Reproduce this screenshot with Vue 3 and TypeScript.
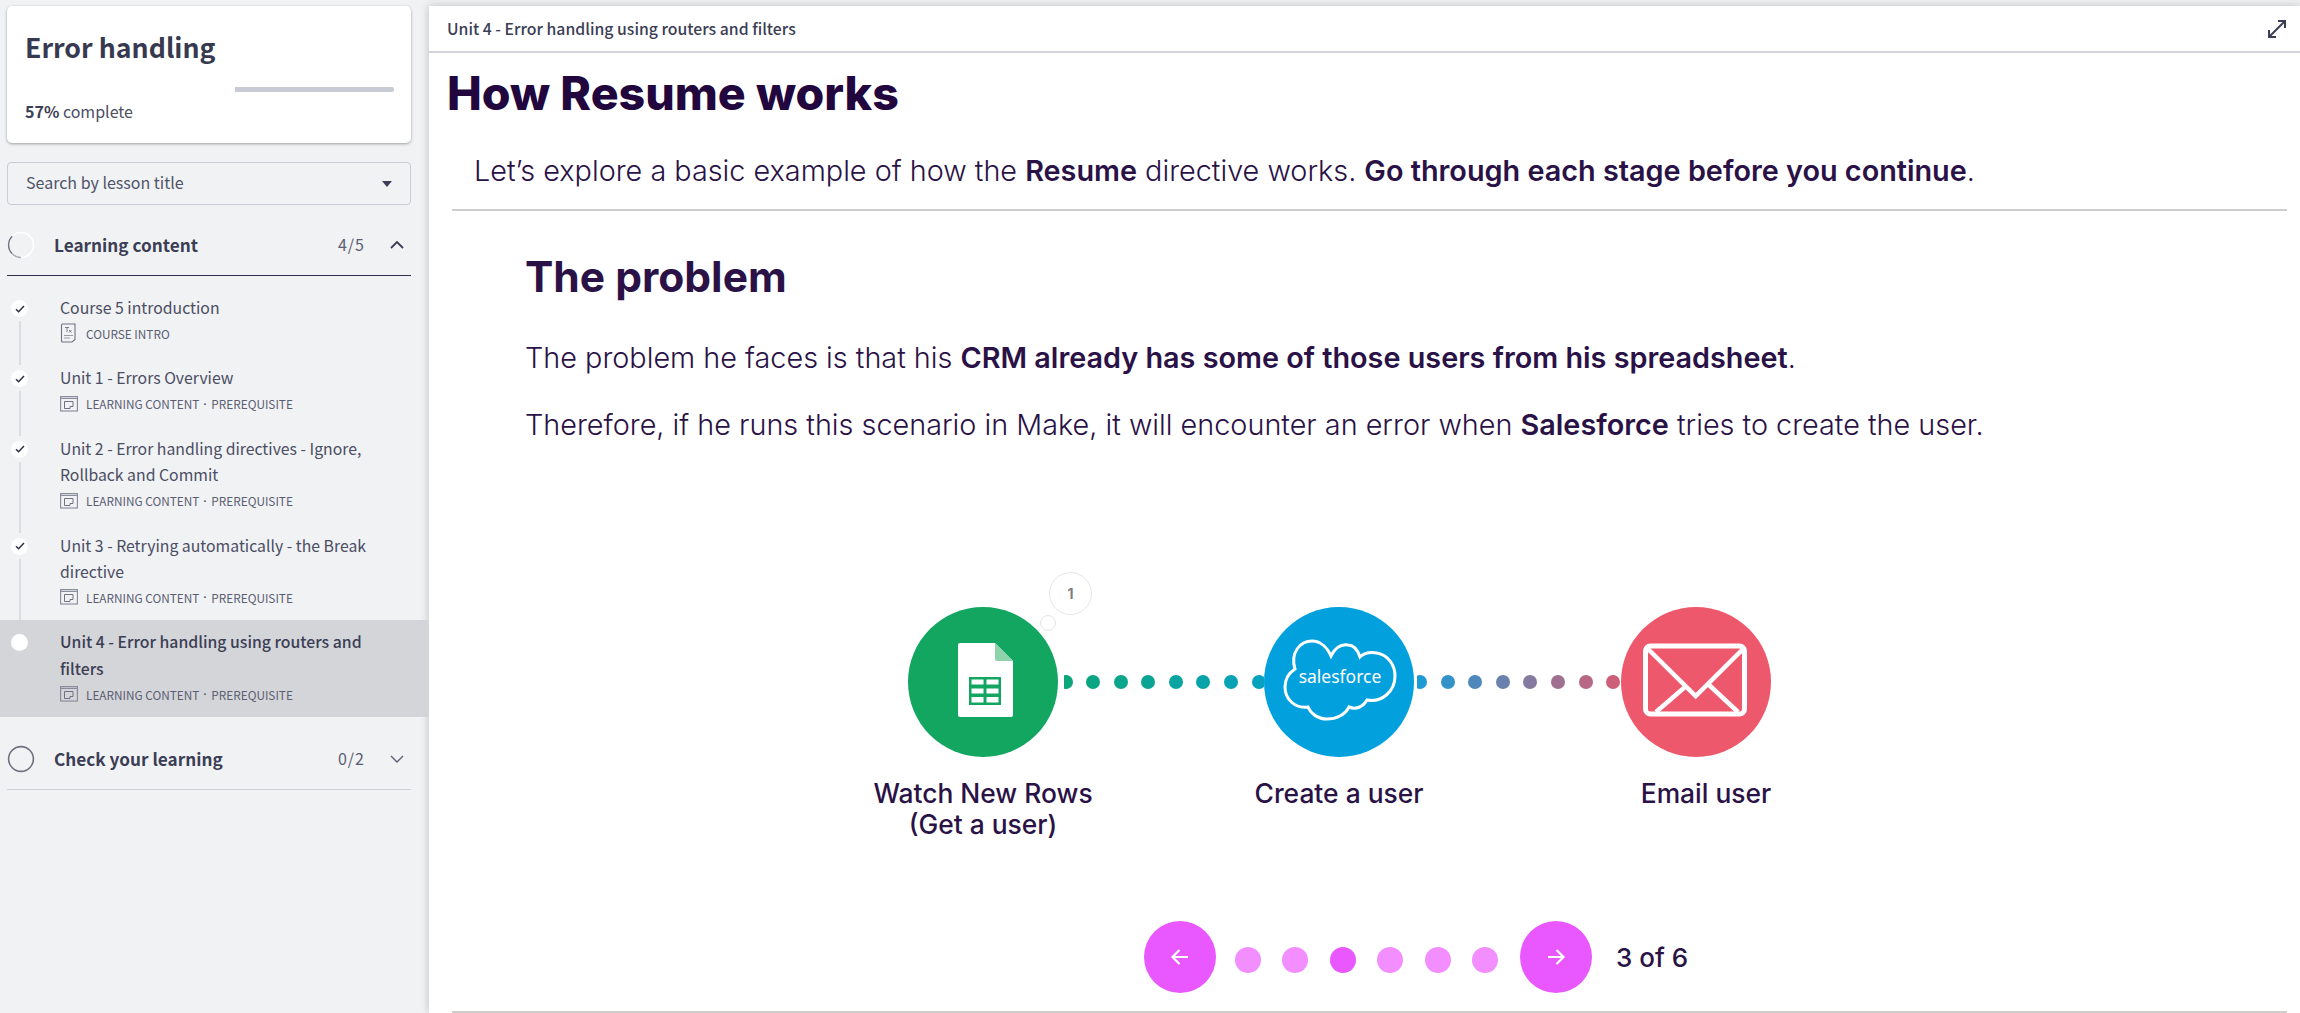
<template>
  <div class="page">
    <aside class="sidebar">
      <div class="course-card">
        <h2 class="course-title">Error handling</h2>
        <div class="progress-track"><div class="progress-fill" :style="{ width: progress + '%' }"></div></div>
        <div class="progress-text"><b>{{ progress }}%</b> complete</div>
      </div>

      <div class="search-select">
        <span>Search by lesson title</span>
        <i class="caret"></i>
      </div>

      <div class="section-head open">
        <svg class="ring" width="28" height="28" viewBox="0 0 28 28">
          <circle cx="14" cy="14" r="12.5" fill="none" stroke="#ffffff" stroke-width="1.6" />
          <path d="M5.2 5.2A12.5 12.5 0 0 0 5.2 22.8" fill="none" stroke="#6d7080" stroke-width="1.4" />
          <path d="M5.2 22.8A12.5 12.5 0 0 0 14 26.5" fill="none" stroke="#a9abb5" stroke-width="1.4" />
        </svg>
        <span class="section-title">Learning content</span>
        <span class="section-count">4/5</span>
        <svg class="chevron" width="16" height="10" viewBox="0 0 16 10">
          <path d="M2 8l6-6 6 6" fill="none" stroke="#3b3e55" stroke-width="1.8" />
        </svg>
      </div>

      <ul class="lessons">
        <li v-for="(lesson, i) in lessons" :key="lesson.title" class="lesson" :class="{ current: lesson.current }">
          <span class="lesson-dot">
            <svg v-if="!lesson.current" width="10" height="8" viewBox="0 0 10 8">
              <path d="M1 4.2l2.6 2.5L9 1" fill="none" stroke="#2c2e44" stroke-width="1.5" />
            </svg>
          </span>
          <span v-if="i < lessons.length - 1" class="lesson-line"></span>
          <div class="lesson-title">{{ lesson.title }}</div>
          <div class="lesson-meta">
            <svg v-if="lesson.intro" class="meta-icon" width="18" height="20" viewBox="0 0 18 20">
              <path d="M2.5 1h12.5v15.5l-3 2.5H2.5q-1 0-1-1V2q0-1 1-1z" fill="none" stroke="#6f7284" stroke-width="1.1" />
              <path d="M5 4.5h4M7 4.5v4.5M9 7l2.5 2.5M11.5 7L9 9.5" fill="none" stroke="#6f7284" stroke-width="0.9" />
              <path d="M4 12.5h9M4 15h6" fill="none" stroke="#9a9cab" stroke-width="1" />
            </svg>
            <svg v-else class="meta-icon" width="18" height="16" viewBox="0 0 18 16">
              <rect x="0.6" y="0.6" width="16.8" height="14.4" fill="none" stroke="#85889a" stroke-width="1.1" />
              <path d="M0.6 2.4h16.8" stroke="#85889a" stroke-width="1.1" />
              <path d="M4.5 5.5h8.500v5h-3v2H4.500z" fill="none" stroke="#6f7284" stroke-width="1" />
            </svg>
            <span>{{ lesson.kind }}</span>
            <template v-if="lesson.required">
              <span class="meta-sep">·</span>
              <span>PREREQUISITE</span>
            </template>
          </div>
        </li>
      </ul>

      <div class="section-head">
        <svg class="ring" width="28" height="28" viewBox="0 0 28 28">
          <circle cx="14" cy="14" r="12.4" fill="none" stroke="#6d7080" stroke-width="1.6" />
        </svg>
        <span class="section-title">Check your learning</span>
        <span class="section-count">0/2</span>
        <svg class="chevron" width="16" height="10" viewBox="0 0 16 10">
          <path d="M2 2l6 6 6-6" fill="none" stroke="#5b5e72" stroke-width="1.4" />
        </svg>
      </div>
    </aside>

    <main class="main">
      <header class="topbar">
        <span>Unit 4 - Error handling using routers and filters</span>
        <svg width="20" height="20" viewBox="0 0 20 20">
          <path d="M2 18L18 2M11 2h7v7M2 11v7h7" fill="none" stroke="#3b3e55" stroke-width="2" />
        </svg>
      </header>

      <h1 class="page-title">How Resume works</h1>
      <p class="intro">Let’s explore a basic example of how the <b>Resume</b> directive works. <b>Go through each stage before you continue</b>.</p>
      <div class="divider"></div>

      <section class="stage">
        <h2 class="stage-title">The problem</h2>
        <p class="stage-text">The problem he faces is that his <b>CRM already has some of those users from his spreadsheet</b>.</p>
        <p class="stage-text">Therefore, if he runs this scenario in Make, it will encounter an error when <b>Salesforce</b> tries to create the user.</p>

        <div class="flow">
          <div class="node sheets">
            <span class="bubble">1</span>
            <span class="bubble-tail"></span>
            <svg width="150" height="150" viewBox="0 0 150 150">
              <path d="M52 36h35l18 18v54q0 2-2 2H52q-2 0-2-2V38q0-2 2-2z" fill="#fff" />
              <path d="M87 36l18 18H89q-2 0-2-2z" fill="#8dd3ab" />
              <rect x="61" y="70" width="32" height="28" fill="#12a661" />
              <path d="M63.500 72.500h12v5h-12zM78.500 72.500h12v5h-12zM63.500 81.500h12v5h-12zM78.500 81.500h12v5h-12zM63.500 90h12v5.500h-12zM78.500 90h12v5.500h-12z" fill="#fff" />
            </svg>
          </div>
          <div class="connector first">
            <i v-for="c in greenDots" :key="c" :style="{ background: c }"></i>
          </div>
          <div class="node force">
            <svg width="150" height="150" viewBox="0 0 150 150">
              <path d="M31 62C26 46 36 34 48 34C56 34 63 40 67 49C71 41 77 37 84 38C90 38 94 44 96 50C100 46 107 45 113 46C124 48 131 58 131 69C131 84 118 96 103 93C99 100 92 103 85 100C81 108 72 112 63 112C54 112 47 107 44 100C31 102 21 92 21 80C21 72 25 66 31 62Z" fill="none" stroke="#fff" stroke-width="3" />
              <text x="76" y="76" text-anchor="middle" class="force-text">salesforce</text>
            </svg>
          </div>
          <div class="connector second">
            <i v-for="c in mixDots" :key="c" :style="{ background: c }"></i>
          </div>
          <div class="node mail">
            <svg width="150" height="150" viewBox="0 0 150 150">
              <rect x="24.500" y="39" width="99" height="68" rx="5" fill="none" stroke="#fff" stroke-width="5" />
              <path d="M26 41l48.700 48L123 41M35 105l29-25M117 105L87 77" fill="none" stroke="#fff" stroke-width="4.500" />
            </svg>
          </div>
          <div class="flow-label">Watch New Rows<br />(Get a user)</div>
          <div class="flow-label second-col">Create a user</div>
          <div class="flow-label third-col">Email user</div>
        </div>

        <nav class="pager">
          <button class="pager-btn" aria-label="Previous">
            <svg width="24" height="24" viewBox="0 0 24 24"><path d="M20 12H5M11.500 5L4.500 12l7 7" fill="none" stroke="#fff" stroke-width="2.200" /></svg>
          </button>
          <div class="pager-dots">
            <i v-for="n in 6" :key="n" :class="{ on: n === 3 }"></i>
          </div>
          <button class="pager-btn" aria-label="Next">
            <svg width="24" height="24" viewBox="0 0 24 24"><path d="M4 12h15M12.500 5l7 7-7 7" fill="none" stroke="#fff" stroke-width="2.200" /></svg>
          </button>
          <span class="pager-text">3 of 6</span>
        </nav>
      </section>

      <div class="divider bottom"></div>
    </main>
  </div>
</template>

<script setup lang="ts">
interface Lesson {
  title: string;
  kind: string;
  required: boolean;
  intro?: boolean;
  current?: boolean;
}

const progress = 57;

const lessons: Lesson[] = [
  { title: 'Course 5 introduction', kind: 'COURSE INTRO', required: false, intro: true },
  { title: 'Unit 1 - Errors Overview', kind: 'LEARNING CONTENT', required: true },
  { title: 'Unit 2 - Error handling directives - Ignore, Rollback and Commit', kind: 'LEARNING CONTENT', required: true },
  { title: 'Unit 3 - Retrying automatically - the Break directive', kind: 'LEARNING CONTENT', required: true },
  { title: 'Unit 4 - Error handling using routers and filters', kind: 'LEARNING CONTENT', required: true, current: true },
];

const greenDots = ['#0ca57c', '#0ca583', '#0ba58c', '#0aa495', '#09a49f', '#08a3a9', '#07a2b3', '#06a1bf'];
const mixDots = ['#1f9bd4', '#3392c8', '#4f89bb', '#6a80ad', '#857aa0', '#9f7090', '#b86785', '#cb6078'];
</script>

<style>
html,
body {
  margin: 0;
  height: 100%;
  overflow: hidden;
  background: #f1f2f4;
}
</style>

<style scoped>
.page {
  display: flex;
  height: 1013px;
  overflow: hidden;
  font-family: "Noto Sans CJK SC", "Noto Sans", sans-serif;
  color: #3b3e55;
}

/* sidebar */
.sidebar {
  width: 429px;
  flex-shrink: 0;
  padding-top: 6px;
  box-sizing: border-box;
}

.course-card {
  width: 404px;
  height: 137px;
  margin-left: 7px;
  padding: 0 17px 0 18px;
  box-sizing: border-box;
  background: #fff;
  border-radius: 5px;
  box-shadow: 0 1px 3px rgba(0, 0, 0, 0.35);
  overflow: hidden;
}

.course-title {
  margin: 23px 0 0;
  font-size: 26.700px;
  line-height: 36px;
  font-weight: 700;
  color: #363950;
}

.progress-track {
  height: 5px;
  margin-top: 22px;
  background: #c8cbd6;
  border-radius: 2px;
}

.progress-fill {
  height: 100%;
  background: #fff;
}

.progress-text {
  margin-top: 8px;
  font-size: 16px;
  line-height: 22px;
  color: #4b4e64;
}

.progress-text b {
  font-weight: 700;
  color: #3b3e55;
}

.search-select {
  display: flex;
  align-items: center;
  justify-content: space-between;
  width: 404px;
  height: 43px;
  margin: 19px 0 10px 7px;
  padding: 0 19px 4px 18px;
  box-sizing: border-box;
  border: 1px solid #c9ccd4;
  border-radius: 4px;
  font-size: 16px;
  color: #50536a;
}

.caret {
  width: 0;
  height: 0;
  margin: 4px -1px 0 0;
  border-left: 5px solid transparent;
  border-right: 5px solid transparent;
  border-top: 6px solid #3b3e55;
}

.section-head {
  display: flex;
  align-items: center;
  width: 404px;
  height: 61px;
  margin-left: 7px;
  box-sizing: border-box;
  border-bottom: 1px solid #cfd1d6;
}

.section-head.open {
  border-bottom-color: #2d2f4e;
}

.ring {
  flex-shrink: 0;
}

.section-title {
  flex: 1;
  margin-left: 19px;
  padding-bottom: 2px;
  font-size: 17.200px;
  font-weight: 700;
  color: #3b3e55;
}

.section-count {
  margin-right: 24px;
  padding-bottom: 2px;
  font-size: 16px;
  letter-spacing: 1px;
  color: #5b5e72;
}

.chevron {
  margin-right: 6px;
}

.lessons {
  margin: 0;
  padding: 10px 0 12px;
  list-style: none;
}

.lesson {
  position: relative;
  padding: 9px 50px 9px 60px;
}

.lesson.current {
  background: #d4d5d9;
}

.lesson-dot {
  position: absolute;
  left: 11px;
  top: 14px;
  display: flex;
  align-items: center;
  justify-content: center;
  width: 17px;
  height: 17px;
  border-radius: 50%;
  background: #fff;
}

.lesson-line {
  position: absolute;
  left: 19px;
  top: 35px;
  bottom: -9px;
  width: 2px;
  background: #dcdde0;
}

.lesson-title {
  font-size: 15.800px;
  line-height: 26.400px;
  color: #4a4d63;
}

.lesson.current .lesson-title {
  font-weight: 500;
  color: #3b3e55;
}

.lesson-meta {
  display: flex;
  align-items: center;
  height: 26px;
  padding-bottom: 2px;
  box-sizing: border-box;
  font-size: 11.800px;
  color: #5b5e72;
  white-space: nowrap;
}

.meta-icon {
  flex-shrink: 0;
  margin-right: 8px;
}

.meta-sep {
  margin: 0 4px;
  font-family: "Liberation Sans", sans-serif;
  font-weight: 700;
}

/* main */
.main {
  display: flex;
  flex-direction: column;
  flex: 1;
  min-width: 0;
  margin-top: 6px;
  background: #fff;
  box-shadow: 0 0 9px rgba(0, 0, 0, 0.22);
  font-family: Inter, "Liberation Sans", sans-serif;
  color: #2a1246;
}

.topbar {
  display: flex;
  align-items: center;
  justify-content: space-between;
  flex-shrink: 0;
  height: 45px;
  padding: 0 13px 0 18px;
  border-bottom: 2px solid #d3d4d9;
  box-sizing: content-box;
  font-family: "Noto Sans CJK SC", "Noto Sans", sans-serif;
  font-size: 15.800px;
  font-weight: 500;
  color: #3b3e55;
}

.page-title {
  margin: 7px 0 0 18px;
  font-size: 46.500px;
  line-height: 66px;
  font-weight: 800;
  color: #22073f;
}

.intro {
  margin: 27px 0 0 45px;
  font-size: 28.800px;
  line-height: 36px;
  font-weight: 300;
}

.intro b,
.stage-text b {
  font-weight: 600;
}

.divider {
  flex-shrink: 0;
  height: 2px;
  margin: 20px 13px 0 23px;
  background: #cfcccc;
}

.divider.bottom {
  margin-top: auto;
  margin-bottom: 0;
}

.stage {
  padding-left: 96px;
}

.stage-title {
  margin: 39px 0 0;
  font-size: 42.500px;
  line-height: 54px;
  font-weight: 700;
}

.stage-text {
  margin: 0;
  padding-top: 31px;
  font-size: 28.800px;
  line-height: 36px;
  font-weight: 300;
}

.stage-title + .stage-text {
  padding-top: 36px;
}

.flow {
  display: grid;
  grid-template-columns: 150px 206px 150px 207px 150px;
  grid-template-rows: 150px auto;
  margin: 164px 0 0 383px;
  width: 863px;
}

.node {
  position: relative;
  z-index: 1;
  width: 150px;
  height: 150px;
  border-radius: 50%;
}

.node svg {
  display: block;
}

.sheets {
  background: #12a661;
}

.force {
  background: #03a0de;
}

.mail {
  background: #ee586c;
}

.force-text {
  font-family: "Noto Sans", sans-serif;
  font-size: 17.500px;
  fill: #fff;
}

.bubble {
  position: absolute;
  left: 141px;
  top: -35px;
  display: flex;
  align-items: center;
  justify-content: center;
  width: 41px;
  height: 41px;
  border: 1.500px solid #e6e6e6;
  border-radius: 50%;
  background: #fff;
  font-size: 14px;
  font-weight: 700;
  color: #7e7e7e;
}

.bubble-tail {
  position: absolute;
  left: 132px;
  top: 8px;
  width: 14px;
  height: 14px;
  border: 1.500px solid #e6e6e6;
  border-radius: 50%;
  background: #fff;
}

.connector {
  display: flex;
  align-items: center;
  gap: 13.600px;
  overflow: hidden;
}

.connector.first {
  margin-left: 6px;
}

.connector.second {
  margin-left: 3px;
}

.connector i {
  flex-shrink: 0;
  width: 14px;
  height: 14px;
  border-radius: 50%;
}

.connector.first i:first-child {
  margin-left: -5.500px;
}

.connector.second i:first-child {
  margin-left: -4px;
}

.flow-label {
  grid-row: 2;
  justify-self: center;
  margin-top: 21px;
  font-size: 26.400px;
  line-height: 31px;
  font-weight: 500;
  text-align: center;
  white-space: nowrap;
  color: #2a1246;
}

.second-col {
  grid-column: 3;
}

.third-col {
  grid-column: 5;
  margin-left: 20px;
}

.pager {
  display: flex;
  align-items: center;
  margin: 81px 0 0 619px;
}

.pager-btn {
  display: flex;
  align-items: center;
  justify-content: center;
  width: 72px;
  height: 72px;
  padding: 0;
  border: none;
  border-radius: 50%;
  background: #e958ff;
}

.pager-dots {
  display: flex;
  gap: 21.400px;
  margin: 6px 0 0 19px;
  width: 285px;
}

.pager-dots i {
  width: 26px;
  height: 26px;
  border-radius: 50%;
  background: #f28eff;
}

.pager-dots i.on {
  background: #e958ff;
}

.pager-text {
  margin-left: 24px;
  font-size: 26px;
  font-weight: 500;
}
</style>
